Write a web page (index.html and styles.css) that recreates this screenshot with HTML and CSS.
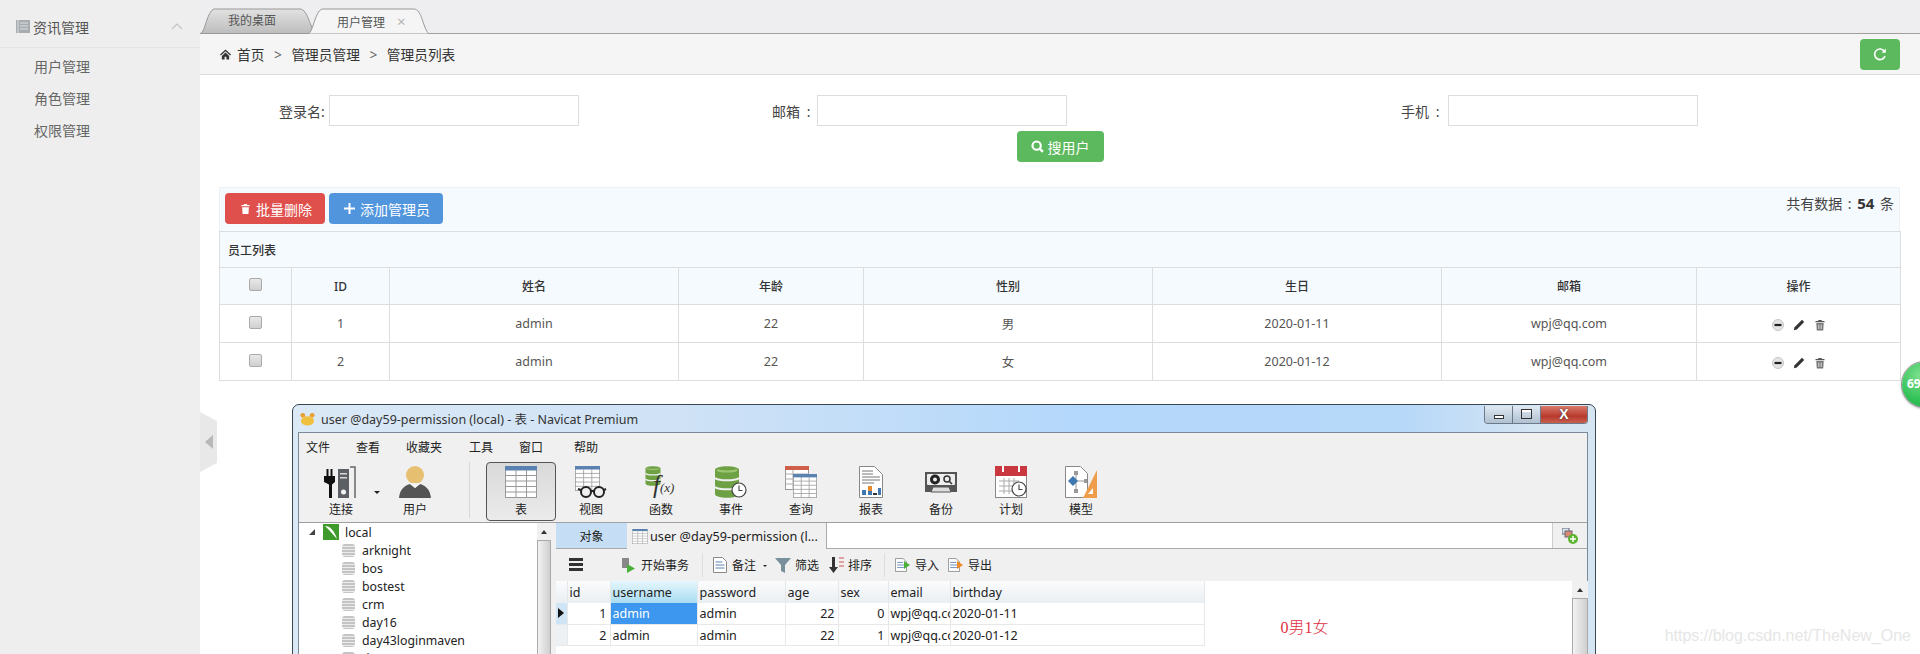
FILE: index.html
```html
<!DOCTYPE html>
<html lang="zh-CN">
<head>
  <meta charset="UTF-8">
  <title>用户管理</title>
  <link rel="stylesheet" href="styles.css">
</head>
<body>

<svg class="sprites" width="0" height="0">
  <defs>
    <symbol id="i-trash" viewBox="0 0 12 12">
      <path d="M4.500 .5h3l.5 1h2.500v1.500h-9V1.500H4z" fill="currentColor"/>
      <path d="M2.300 4h7.400l-.5 7.500H2.800z" fill="currentColor"/>
    </symbol>
    <symbol id="i-trash-line" viewBox="0 0 12 12">
      <path d="M4.500 1h3l.5 1h2.500v1.200h-9V2H4z" fill="#555"/>
      <path d="M2.300 4h7.400l-.5 7.500H2.800z" fill="#777"/>
      <path d="M4.500 5.500v4.500M6 5.500v4.500M7.500 5.500v4.500" stroke="#ddd" stroke-width=".7"/>
    </symbol>
    <symbol id="i-minus" viewBox="0 0 12 12">
      <circle cx="6" cy="6" r="5.500" fill="#e4e4e4" stroke="#bbb" stroke-width=".8"/>
      <rect x="2.500" y="4.900" width="7" height="2.200" fill="#222"/>
    </symbol>
    <symbol id="i-pencil" viewBox="0 0 12 12">
      <path d="M9 .8l2.200 2.200-7.400 7.400L.8 11.200l.8-3z" fill="#333"/>
    </symbol>
    <symbol id="i-grid" viewBox="0 0 32 32">
      <rect x=".5" y=".5" width="31" height="31" fill="#fff" stroke="#999"/>
      <rect x="0" y="0" width="32" height="4.500" fill="#5a82b0"/>
      <path d="M0 9.500h32M0 15h32M0 20.500h32M0 26h32M11 4v28M21.500 4v28" stroke="#999" fill="none"/>
    </symbol>
    <symbol id="i-db" viewBox="0 0 24 32">
      <path d="M0 4c0-5 24-5 24 0v24c0 5-24 5-24 0z" fill="#6ea044"/>
      <path d="M0 12c4 3 20 3 24 0M0 21c4 3 20 3 24 0" stroke="#f0f0f0" stroke-width="2" fill="none"/>
      <path d="M2 4c4 2 16 2 20 0" stroke="#9cc66f" stroke-width="2" fill="none"/>
    </symbol>
    <symbol id="i-clock" viewBox="0 0 16 16">
      <circle cx="8" cy="8" r="7" fill="#fff" stroke="#444" stroke-width="1.200"/>
      <path d="M8 3.500V8.500H11.500" stroke="#444" stroke-width="1.100" fill="none"/>
    </symbol>
    <symbol id="i-sheet" viewBox="0 0 14 16">
      <path d="M.5.5h9l4 4v11H.5z" fill="#fff" stroke="#888"/>
      <path d="M2.500 5h7M2.500 8h9M2.500 11h9" stroke="#5a82b0" fill="none"/>
    </symbol>
  </defs>
</svg>

<aside class="sidebar">
  <div class="side-title">
    <svg class="side-icon" viewBox="0 0 14 13"><rect width="14" height="13" fill="#a6acb0"/><path d="M2 0v13M4 3h8M4 6h8M4 9h8" stroke="#e0e0e0" fill="none"/></svg>
    <span>资讯管理</span>
    <svg class="side-chevron" viewBox="0 0 12 7"><path d="M1 6l5-5 5 5" stroke="#c4c4c4" stroke-width="1.200" fill="none"/></svg>
  </div>
  <ul class="side-menu">
    <li>用户管理</li>
    <li>角色管理</li>
    <li>权限管理</li>
  </ul>
</aside>

<main class="main">
  <div class="tabbar">
    <div class="tab">
      <svg class="tab-shape" viewBox="0 0 116 26" preserveAspectRatio="none"><defs><linearGradient id="tabOff" x1="0" y1="0" x2="0" y2="1"><stop offset="0" stop-color="#e2e2e2"/><stop offset="1" stop-color="#bdbdbd"/></linearGradient></defs><path d="M.5 25.500C5 25 7 3 14 1h86c8 0 10 20 16 24.500z" fill="url(#tabOff)" stroke="#999"/></svg>
      <span>我的桌面</span>
    </div>
    <div class="tab tab-active">
      <svg class="tab-shape" viewBox="0 0 121 26" preserveAspectRatio="none"><path d="M0 26C5 25 7 3 14 1h92c8 0 9 20 15 25z" fill="#f5f5f5" stroke="#999"/></svg>
      <span>用户管理</span><i class="tab-close">×</i>
    </div>
  </div>

  <div class="crumbs">
    <svg class="home-icon" viewBox="0 0 12 11"><path d="M6 0l6 5.500-1 1L6 2 1 6.500l-1-1z" fill="#333"/><path d="M2 7l4-3.800L10 7v4H7V8H5v3H2z" fill="#333"/></svg>
    <span>首页</span><span class="crumb-sep">&gt;</span><span>管理员管理</span><span class="crumb-sep">&gt;</span><span>管理员列表</span>
    <button class="btn btn-refresh">
      <svg viewBox="0 0 14 14" width="14" height="14"><path d="M11.500 4.500A5.300 5.300 0 1 0 12 9" stroke="#fff" stroke-width="1.600" fill="none"/><path d="M12.800 1.500v4.200H8.600z" fill="#fff"/></svg>
    </button>
  </div>

  <form class="search-form">
    <div class="search-row">
      <label class="field field-login"><span>登录名:</span><input type="text"></label>
      <label class="field field-mail"><span>邮箱 :</span><input type="text"></label>
      <label class="field field-phone"><span>手机 :</span><input type="text"></label>
    </div>
    <div class="search-submit">
      <button type="button" class="btn btn-green">
        <svg viewBox="0 0 12 12" width="13" height="13"><circle cx="5.200" cy="5.200" r="3.800" stroke="#fff" stroke-width="2" fill="none"/><path d="M8 8l3 3" stroke="#fff" stroke-width="2.200"/></svg>
        搜用户
      </button>
    </div>
  </form>

  <div class="panel">
    <div class="panel-bar">
      <div class="panel-actions">
        <button class="btn btn-red"><svg width="11" height="12"><use href="#i-trash"/></svg>批量删除</button>
        <button class="btn btn-blue">
          <svg viewBox="0 0 11 11" width="11" height="11"><path d="M5.500 0v11M0 5.500h11" stroke="#fff" stroke-width="2"/></svg>添加管理员
        </button>
      </div>
      <div class="panel-total">共有数据 : <b>54</b> 条</div>
    </div>
    <table class="staff">
      <colgroup>
        <col style="width:72px"><col style="width:98px"><col style="width:289px"><col style="width:185px">
        <col style="width:289px"><col style="width:289px"><col style="width:255px"><col style="width:204px">
      </colgroup>
      <thead>
        <tr class="staff-caption"><th colspan="8">员工列表</th></tr>
        <tr class="staff-head">
          <th><input type="checkbox" class="check"></th><th>ID</th><th>姓名</th><th>年龄</th><th>性别</th><th>生日</th><th>邮箱</th><th>操作</th>
        </tr>
      </thead>
      <tbody>
        <tr>
          <td><input type="checkbox" class="check"></td><td>1</td><td>admin</td><td>22</td><td>男</td><td>2020-01-11</td><td>wpj@qq.com</td>
          <td><span class="ops"><svg><use href="#i-minus"/></svg><svg><use href="#i-pencil"/></svg><svg><use href="#i-trash-line"/></svg></span></td>
        </tr>
        <tr>
          <td><input type="checkbox" class="check"></td><td>2</td><td>admin</td><td>22</td><td>女</td><td>2020-01-12</td><td>wpj@qq.com</td>
          <td><span class="ops"><svg><use href="#i-minus"/></svg><svg><use href="#i-pencil"/></svg><svg><use href="#i-trash-line"/></svg></span></td>
        </tr>
      </tbody>
    </table>
  </div>

  <section class="nav-window">
    <div class="nav-title">
      <svg class="nav-logo" viewBox="0 0 16 14"><ellipse cx="8" cy="9" rx="7" ry="5" fill="#f0c040"/><circle cx="3" cy="3" r="2.500" fill="#e8a030"/><circle cx="13" cy="3" r="2.500" fill="#e8a030"/></svg>
      <span>user @day59-permission (local) - 表 - Navicat Premium</span>
      <div class="win-btns">
        <span class="win-btn win-min"><i></i></span>
        <span class="win-btn win-max"><i></i></span>
        <span class="win-btn win-close">X</span>
      </div>
    </div>

    <div class="nav-body">
      <div class="nav-menu">
        <span>文件</span><span>查看</span><span class="nav-menu-fav">收藏夹</span><span>工具</span><span>窗口</span><span class="nav-menu-last">帮助</span>
      </div>

      <div class="nav-tools">
        <div class="tool tool-wide">
          <svg class="tool-icon" viewBox="0 0 36 32">
            <path d="M2 10h2.500V3h2v7h2V3h2v7H13v6l-3 2.500V32H7V18.500L2 16z" fill="#111" transform="translate(-1 0)"/>
            <path d="M15 3h11v29H15z" fill="#5c6064"/>
            <path d="M17 7h7v1.500h-7zM17 11h7v1.500h-7z" fill="#d8d8d8"/>
            <circle cx="20.500" cy="26" r="2.500" fill="#f2f2f2"/>
            <path d="M27 1h5v31" stroke="#666" stroke-width="1.500" fill="none"/>
          </svg>
          <span>连接</span>
          <i class="tool-caret"></i>
        </div>
        <div class="tool tool-wide">
          <svg class="tool-icon" viewBox="0 0 32 32">
            <circle cx="16" cy="9" r="9" fill="#e6c070"/>
            <path d="M0 32c1-9 5-12 11-14l5 4 5-4c6 2 10 5 11 14z" fill="#555"/>
            <path d="M11 18l5 4 5-4-2-1h-6z" fill="#f3f3f3"/>
          </svg>
          <span>用户</span>
        </div>
        <i class="tool-sep"></i>
        <div class="tool tool-on">
          <svg class="tool-icon"><use href="#i-grid"/></svg>
          <span>表</span>
        </div>
        <div class="tool">
          <svg class="tool-icon" viewBox="0 0 32 32">
            <use href="#i-grid" width="25" height="25" x="0" y="0"/>
            <circle cx="11" cy="26" r="5" fill="#f0f0f0" stroke="#222" stroke-width="2"/>
            <circle cx="24" cy="26" r="5" fill="#f0f0f0" stroke="#222" stroke-width="2"/>
            <path d="M16 25h3M6 24l-3-1M29 24l2-1" stroke="#222" stroke-width="2"/>
          </svg>
          <span>视图</span>
        </div>
        <div class="tool">
          <svg class="tool-icon" viewBox="0 0 32 32">
            <use href="#i-db" width="16" height="20"/>
            <text x="8" y="27" class="fx-text">f<tspan class="fx-small" dy="-1">(x)</tspan></text>
          </svg>
          <span>函数</span>
        </div>
        <div class="tool">
          <svg class="tool-icon" viewBox="0 0 32 32">
            <use href="#i-db" width="24" height="32"/>
            <use href="#i-clock" x="16" y="16" width="16" height="16"/>
          </svg>
          <span>事件</span>
        </div>
        <div class="tool">
          <svg class="tool-icon" viewBox="0 0 32 32">
            <rect x=".5" y=".5" width="23" height="23" fill="#fff" stroke="#999"/>
            <rect width="24" height="4" fill="#cf5f4a"/>
            <path d="M0 8h24M0 13h24M0 18h24M8 4v20" stroke="#aaa" fill="none"/>
            <use href="#i-grid" x="8" y="8" width="24" height="24"/>
          </svg>
          <span>查询</span>
        </div>
        <div class="tool">
          <svg class="tool-icon" viewBox="0 0 24 32">
            <path d="M.5.5h15l8 8v23H.5z" fill="#fff" stroke="#888"/>
            <path d="M3 5h11M3 8h11M3 11h18M3 14h18M3 17h12" stroke="#777" fill="none"/>
            <path d="M3 24h4v5H3zM9 20h4v9H9zM19 22h3v7h-3z" fill="#3f78b0"/>
            <path d="M9 20h4v5H9z" fill="#e58a2f"/>
            <path d="M14 27h4v2h-4z" fill="#333"/>
          </svg>
          <span>报表</span>
        </div>
        <div class="tool">
          <svg class="tool-icon" viewBox="0 0 32 32">
            <path d="M0 6h32v20H0z" fill="#555"/>
            <rect x="2" y="8" width="28" height="11" rx="1" fill="#eee"/>
            <circle cx="10" cy="13.500" r="5" fill="#222"/><circle cx="10" cy="13.500" r="2" fill="#eee"/>
            <circle cx="22" cy="13" r="3" fill="none" stroke="#333" stroke-width="1.500"/>
            <path d="M24 15l3 3" stroke="#333" stroke-width="1.500"/>
            <path d="M6 26l2-5h16l2 5z" fill="#ddd" stroke="#555"/>
          </svg>
          <span>备份</span>
        </div>
        <div class="tool">
          <svg class="tool-icon" viewBox="0 0 32 32">
            <rect x=".5" y=".5" width="31" height="31" fill="#fff" stroke="#888"/>
            <rect width="32" height="10" fill="#c9383e"/>
            <path d="M8 0v6M24 0v6" stroke="#fff" stroke-width="2"/>
            <path d="M4 15h20M4 20h20M4 25h20M9 12v16M14 12v16M19 12v16" stroke="#aaa" fill="none"/>
            <use href="#i-clock" x="16" y="15" width="16" height="16"/>
          </svg>
          <span>计划</span>
        </div>
        <div class="tool">
          <svg class="tool-icon" viewBox="0 0 32 32">
            <path d="M.5.5h15l7 7v24H.5z" fill="#fff" stroke="#888"/>
            <path d="M9 5h4v4H9zM9 23h4v4H9zM19 13h3v4h-3z" fill="#999"/>
            <path d="M11 9v14M11 15h8" stroke="#999" fill="none"/>
            <path d="M3 15l5-5 5 5-5 5z" fill="#3f78b0"/>
            <path d="M32 4v28H18z" fill="#ef9d4b"/>
            <path d="M28 22v6h-5z" fill="#fff"/>
          </svg>
          <span>模型</span>
        </div>
      </div>

      <div class="nav-split">
        <div class="tree">
          <ul class="tree-list">
            <li class="tree-root">
              <i class="tree-arrow"></i>
              <svg class="tree-conn" viewBox="0 0 16 16"><rect width="16" height="16" fill="#3f9a2c"/><path d="M2 2c5 0 9 4 12 13L6 6z" fill="#fff"/></svg>
              local
            </li>
            <li><i class="db-dot"></i>arknight</li>
            <li><i class="db-dot"></i>bos</li>
            <li><i class="db-dot"></i>bostest</li>
            <li><i class="db-dot"></i>crm</li>
            <li><i class="db-dot"></i>day16</li>
            <li><i class="db-dot"></i>day43loginmaven</li>
            <li><i class="db-dot"></i>day59</li>
          </ul>
          <div class="vscroll"><i class="vscroll-up"></i><i class="vscroll-thumb"></i></div>
        </div>

        <div class="pane">
          <div class="pane-tabs">
            <span class="pane-tab pane-tab-obj">对象</span>
            <span class="pane-tab pane-tab-doc"><svg width="16" height="15"><use href="#i-grid"/></svg>user @day59-permission (l...</span>
            <span class="pane-blank"></span>
            <span class="pane-add">
              <svg viewBox="0 0 16 16" width="16" height="16"><rect x="0" y="0" width="7" height="6" fill="#d9e4ef" stroke="#667"/><rect x="3" y="3" width="7" height="6" fill="#d98a70" stroke="#667"/><circle cx="11" cy="11" r="5" fill="#5cb531"/><path d="M11 8v6M8 11h6" stroke="#fff" stroke-width="1.500"/></svg>
            </span>
          </div>

          <div class="pane-tools">
            <span class="ham"><i></i><i></i><i></i></span>
            <span class="ptool ptool-begin">
              <svg viewBox="0 0 14 16" width="14" height="16"><rect x="1" y="1" width="7" height="10" fill="#888"/><path d="M6 7l8 4.500L6 16z" fill="#4bb03a"/></svg>开始事务
            </span>
            <i class="ptool-sep ptool-sep-a"></i>
            <span class="ptool ptool-note"><svg width="14" height="16"><use href="#i-sheet"/></svg>备注<i class="mini-caret"></i></span>
            <span class="ptool ptool-filter">
              <svg viewBox="0 0 16 16" width="16" height="16"><path d="M0 1h16l-6 7v8l-4-2V8z" fill="#78909c"/></svg>筛选
            </span>
            <span class="ptool ptool-sort">
              <svg viewBox="0 0 15 16" width="15" height="16"><path d="M3 0h3v10h3l-4.500 6L0 10h3z" fill="#333"/><path d="M10 1h5M10 5h5M10 9h5" stroke="#c55" fill="none"/></svg>排序
            </span>
            <i class="ptool-sep ptool-sep-b"></i>
            <span class="ptool ptool-in">
              <svg viewBox="0 0 15 16" width="15" height="16"><use href="#i-sheet" width="12" height="16"/><path d="M15 8l-6-4v8z" fill="#4bb03a"/></svg>导入
            </span>
            <span class="ptool ptool-out">
              <svg viewBox="0 0 15 16" width="15" height="16"><use href="#i-sheet" width="12" height="16"/><path d="M15 8l-6-4v8z" fill="#ee8a1f"/></svg>导出
            </span>
          </div>

          <div class="grid-area">
            <table class="grid">
              <colgroup>
                <col style="width:11px"><col style="width:43px"><col style="width:87px"><col style="width:88px">
                <col style="width:53px"><col style="width:50px"><col style="width:62px"><col style="width:254px">
              </colgroup>
              <thead>
                <tr><th></th><th>id</th><th class="grid-sel">username</th><th>password</th><th>age</th><th>sex</th><th>email</th><th>birthday</th></tr>
              </thead>
              <tbody>
                <tr><td class="grid-mark grid-mark-on"><i></i></td><td class="num">1</td><td class="grid-cell-on">admin</td><td>admin</td><td class="num">22</td><td class="num">0</td><td>wpj@qq.com</td><td>2020-01-11</td></tr>
                <tr><td class="grid-mark"></td><td class="num">2</td><td>admin</td><td>admin</td><td class="num">22</td><td class="num">1</td><td>wpj@qq.com</td><td>2020-01-12</td></tr>
              </tbody>
            </table>
            <p class="grid-note">0男1女</p>
            <div class="vscroll vscroll-grid"><i class="vscroll-up"></i><i class="vscroll-thumb"></i></div>
          </div>
        </div>
      </div>
    </div>
  </section>

  <div class="side-handle"><i></i></div>
</main>

<div class="bubble">69</div>
<div class="watermark">https://blog.csdn.net/TheNew_One</div>

</body>
</html>
```

FILE: styles.css
```css
* {
  box-sizing: border-box;
}

html, body {
  height: 100%;
}

body {
  margin: 0;
  display: flex;
  overflow: hidden;
  position: relative;
  background: #fff;
  color: #333;
  font-family: "Noto Sans", "Noto Sans CJK SC", sans-serif;
  font-size: 14px;
}

.sprites {
  position: absolute;
}

/* sidebar */
.sidebar {
  width: 200px;
  flex: none;
  background: #eeeeee;
}

.side-title {
  height: 48px;
  display: flex;
  align-items: center;
  padding: 6px 17px 0 16px;
  border-bottom: 1px solid #e5e5e5;
  color: #555;
}

.side-icon {
  width: 14px;
  height: 13px;
  margin-right: 3px;
}

.side-chevron {
  width: 12px;
  height: 7px;
  margin-left: auto;
}

.side-menu {
  list-style: none;
  margin: 0;
  padding: 3px 0 0 34px;
  color: #666;
}

.side-menu li {
  line-height: 32px;
}

/* main column */
.main {
  flex: 1;
  min-width: 0;
  height: 100%;
  overflow: hidden;
  position: relative;
}

.tabbar {
  height: 34px;
  display: flex;
  align-items: flex-end;
  background: #eeeef0;
  border-bottom: 1px solid #a0a0a0;
  font-size: 12px;
  color: #555;
}

.tab {
  position: relative;
  width: 116px;
  height: 26px;
  margin-bottom: -1px;
  padding: 0 0 0 28px;
  line-height: 26px;
}

.tab span, .tab i {
  position: relative;
}

.tab-active {
  width: 121px;
  margin-left: -8px;
  padding-left: 29px;
}

.tab-shape {
  position: absolute;
  left: 0;
  top: 0;
  width: 100%;
  height: 100%;
}

.tab-close {
  margin-left: 12px;
  font-style: normal;
  font-size: 15px;
  color: #b5b5b5;
}

.crumbs {
  height: 41px;
  display: flex;
  align-items: center;
  padding: 0 20px;
  background: #f5f5f5;
  border-bottom: 1px solid #ddd;
  font-size: 13.700px;
}

.home-icon {
  width: 11px;
  height: 11px;
  margin-right: 6px;
}

.crumb-sep {
  width: 27px;
  text-align: center;
  color: #666;
}

.btn {
  display: inline-flex;
  align-items: center;
  height: 31px;
  border: 0;
  border-radius: 4px;
  color: #fff;
  font: inherit;
  font-size: 14px;
}

.btn-refresh {
  width: 40px;
  margin-left: auto;
  justify-content: center;
  background: #5db95d;
}

.search-form {
  padding-top: 20px;
}

.search-row {
  display: flex;
  padding-left: 79px;
}

.field {
  display: flex;
  align-items: center;
  color: #444;
}

.field span {
  width: 50px;
  word-spacing: 3px;
}

.field input {
  width: 250px;
  height: 31px;
  padding: 0 6px;
  border: 1px solid #ddd;
  background: #fff;
}

.field-mail {
  margin-left: 193px;
}

.field-mail span {
  width: 45px;
}

.field-phone {
  margin-left: 334px;
}

.field-phone span {
  width: 47px;
}

.search-submit {
  margin-top: 5px;
  text-align: center;
}

.btn-green {
  width: 87px;
  padding-left: 14px;
  gap: 4px;
  background: #5db95d;
}

.panel {
  margin: 25px 20px 0 19px;
}

.panel-bar {
  height: 44px;
  display: flex;
  justify-content: space-between;
  padding: 5px 5px 0 5px;
  background: #f5fafe;
  border: 1px solid #edf1f4;
  border-bottom: 0;
}

.panel-actions {
  display: flex;
  gap: 4px;
}

.btn-red {
  width: 100px;
  padding-left: 15px;
  gap: 5px;
  background: #df4f4c;
}

.btn-blue {
  width: 114px;
  padding-left: 15px;
  gap: 5px;
  background: #5195dd;
}

.panel-total {
  line-height: 20px;
  word-spacing: 2px;
  color: #444;
}

.panel-total b {
  font-size: 15px;
  color: #333;
}

.staff {
  width: 1681px;
  table-layout: fixed;
  border-collapse: collapse;
  font-size: 12.500px;
  color: #555;
}

.staff th, .staff td {
  border: 1px solid #ddd;
  text-align: center;
  padding: 0;
}

.staff th {
  background: #f5fafe;
  color: #333;
  font-size: 12px;
  font-weight: 500;
}

.staff-caption {
  height: 36px;
}

.staff .staff-caption th {
  text-align: left;
  padding-left: 8px;
}

.staff-head {
  height: 37px;
}

.staff tbody tr {
  height: 38px;
}

.check {
  appearance: none;
  display: block;
  width: 13px;
  height: 13px;
  margin: -3px auto 0;
  border: 1px solid #aaa;
  border-radius: 2px;
  background: linear-gradient(#e8e8e8, #d0d0d0);
}

.ops {
  display: inline-flex;
  gap: 9px;
  vertical-align: middle;
  color: #555;
}

.ops svg {
  width: 12px;
  height: 12px;
}

/* navicat screenshot pasted under the table */
.nav-window {
  width: 1304px;
  height: 300px;
  margin: 23px 0 0 92px;
  padding: 0 7px 0 5px;
  border: 1px solid #3a4650;
  border-radius: 7px 7px 0 0;
  background: linear-gradient(90deg, #dbe9f6 0, #cfe2f6 30%, #b4d8fb 60%, #b6d8f9 85%, #d6e5f2 96%);
  color: #222;
  font-size: 12px;
}

.nav-title {
  height: 27px;
  display: flex;
  align-items: center;
  font-size: 12.500px;
  color: #333;
}

.nav-logo {
  width: 15px;
  height: 14px;
  margin: 0 6px 0 2px;
}

.win-btns {
  display: flex;
  height: 18px;
  margin: -8px 0 0 auto;
  border: 1px solid #6a7a8a;
  border-top: 0;
  border-radius: 0 0 4px 4px;
  overflow: hidden;
}

.win-btn {
  width: 28px;
  display: flex;
  align-items: center;
  justify-content: center;
  background: linear-gradient(#dfe9f3, #b0c0d0);
  border-right: 1px solid #6a7a8a;
}

.win-min i {
  width: 10px;
  height: 4px;
  margin-top: 6px;
  border: 1px solid #333;
  background: #fff;
}

.win-max i {
  width: 11px;
  height: 10px;
  border: 1px solid #333;
  box-shadow: inset 0 2px 0 #fff;
}

.win-close {
  width: 46px;
  border-right: 0;
  background: linear-gradient(#d97a6c, #b83a2c 60%, #c8604f);
  color: #fff;
  font: bold 14px "Liberation Sans", sans-serif;
  text-shadow: 0 0 2px #333;
}

.nav-body {
  height: 300px;
  background: #f0f0f0;
  border: 1px solid #7a8a99;
  border-bottom: 0;
}

.nav-menu {
  display: flex;
  height: 28px;
  align-items: center;
}

.nav-menu span {
  padding: 0 13px;
}

.nav-menu span:first-child {
  padding-left: 7px;
}

.nav-menu .nav-menu-fav {
  margin-right: 1px;
}

.nav-menu .nav-menu-last {
  margin-left: 5px;
}

.nav-tools {
  display: flex;
  height: 62px;
  padding: 1px 0 0 5px;
  border-bottom: 1px solid #a0a0a0;
}

.tool {
  position: relative;
  width: 70px;
  height: 59px;
  display: flex;
  flex-direction: column;
  align-items: center;
  padding-top: 3px;
  border: 1px solid transparent;
  border-radius: 4px;
}

.tool-wide {
  width: 74px;
}

.tool-on {
  border-color: #555;
  background: linear-gradient(#d9d9d9, #ebebeb);
}

.tool-icon {
  width: 32px;
  height: 32px;
  margin-bottom: 2px;
}

.tool-wide .tool-icon {
  width: 36px;
}

.tool-caret {
  position: absolute;
  right: -3px;
  top: 28px;
  border: 3px solid transparent;
  border-top-color: #222;
}

.tool-sep {
  width: 1px;
  height: 56px;
  margin: 0 16px 0 17px;
  background: #d8d8d8;
}

.fx-text {
  font: italic 25px "Liberation Serif", serif;
  fill: #333;
}

.fx-small {
  font-size: 13px;
}

.nav-split {
  display: flex;
  height: 200px;
}

/* tree */
.tree {
  width: 252px;
  flex: none;
  display: flex;
  background: #fff;
  font-size: 12.300px;
}

.tree-list {
  flex: 1;
  list-style: none;
  margin: 0;
  padding: 0 0 0 43px;
  overflow: hidden;
}

.tree-list li {
  height: 18px;
  display: flex;
  align-items: center;
}

.tree-root {
  margin-left: -33px;
}

.tree-arrow {
  width: 0;
  height: 0;
  margin-right: 8px;
  border: 3px solid transparent;
  border-right-color: #444;
  border-bottom-color: #444;
}

.tree-conn {
  width: 16px;
  height: 16px;
  margin-right: 6px;
}

.db-dot {
  width: 13px;
  height: 13px;
  margin-right: 7px;
  border-radius: 3px;
  background: repeating-linear-gradient(#c4c4c4 0, #c4c4c4 2px, #ececec 2px, #ececec 3px);
}

.vscroll {
  width: 14px;
  flex: none;
  background: #f0f0f0;
  display: flex;
  flex-direction: column;
  align-items: center;
}

.vscroll-up {
  margin-top: 7px;
  border: 3px solid transparent;
  border-top: 0;
  border-bottom: 4px solid #333;
}

.vscroll-thumb {
  width: 100%;
  height: 200px;
  margin-top: 6px;
  border: 1px solid #aaa;
  background: linear-gradient(90deg, #f2f2f2, #cfcfcf);
}

/* right pane */
.pane {
  flex: 1;
  min-width: 0;
  padding-left: 5px;
}

.pane-tabs {
  display: flex;
  height: 26px;
  border-bottom: 1px solid #aaa;
}

.pane-tab {
  display: flex;
  align-items: center;
  justify-content: center;
}

.pane-tab-obj {
  width: 71px;
  background: #c6def5;
}

.pane-tab-doc {
  width: 200px;
  height: 26px;
  justify-content: flex-start;
  padding-left: 5px;
  gap: 2px;
  background: #f0f0f0;
  border-right: 1px solid #aaa;
  white-space: nowrap;
  font-size: 12.700px;
}

.pane-blank {
  flex: 1;
  background: #fff;
}

.pane-add {
  width: 35px;
  display: flex;
  align-items: center;
  justify-content: center;
  border-left: 1px solid #ccc;
}

.pane-tools {
  height: 32px;
  display: flex;
  align-items: center;
}

.ham {
  width: 14px;
  margin-left: 13px;
}

.ham i {
  display: block;
  height: 3px;
  margin-bottom: 2px;
  background: #333;
}

.ptool {
  display: inline-flex;
  align-items: center;
  gap: 5px;
}

.ptool-begin {
  margin-left: 38px;
  gap: 6px;
}

.ptool-sep {
  width: 1px;
  height: 24px;
  background: #ddd;
}

.ptool-sep-a {
  margin: 0 10px 0 13px;
}

.mini-caret {
  margin: 3px 0 0 2px;
  border: 2.500px solid transparent;
  border-top-color: #222;
}

.ptool-filter {
  margin-left: 8px;
  gap: 4px;
}

.ptool-sort {
  margin-left: 10px;
  gap: 4px;
}

.ptool-sep-b {
  margin: 0 10px 0 12px;
}

.ptool-out {
  margin-left: 9px;
}

.grid-area {
  height: 140px;
  display: flex;
  background: #fff;
}

.grid {
  width: 648px;
  height: 65px;
  flex: none;
  table-layout: fixed;
  border-collapse: collapse;
  font-size: 12.500px;
  color: #222;
}

.grid th {
  height: 22px;
  padding: 0 0 0 2px;
  text-align: left;
  font-weight: 400;
  background: linear-gradient(#fbfcfd, #e9eef2);
  border-right: 1px solid #e4e8ea;
  overflow: hidden;
}

.grid .grid-sel {
  background: linear-gradient(#e6f6fc, #a8dcf2);
}

.grid td {
  height: 21px;
  padding: 1px 1px 0 2px;
  border-right: 1px solid #e8e8e8;
  border-bottom: 1px solid #e8e8e8;
  white-space: nowrap;
  overflow: hidden;
}

.grid .num {
  text-align: right;
  padding-right: 3px;
}

.grid .grid-mark {
  padding: 0;
  background: #eef1f4;
}

.grid .grid-mark-on {
  background: #cfe4f5;
}

.grid-mark i {
  display: block;
  width: 0;
  margin-left: 2px;
  border: 5px solid transparent;
  border-left: 6px solid #111;
  border-right: 0;
}

.grid .grid-cell-on {
  background: #3d97ee;
  color: #fff;
}

.grid-note {
  flex: none;
  margin: 36px 0 0 76px;
  width: 291px;
  font: 300 16px/22px "Liberation Serif", "Noto Sans CJK SC", serif;
  color: #e0303f;
}

.vscroll-grid {
  margin-left: auto;
  width: 16px;
}

/* things lying over the page */
.side-handle {
  position: absolute;
  left: 0;
  top: 412px;
  width: 17px;
  height: 60px;
  display: flex;
  align-items: center;
  padding-left: 5px;
  background: #e8e8e8;
  clip-path: polygon(0 0, 100% 15%, 100% 85%, 0 100%);
}

.side-handle i {
  border: 7px solid transparent;
  border-right: 8px solid #b8b8b8;
  border-left: 0;
}

.bubble {
  position: absolute;
  left: 1902px;
  top: 362px;
  width: 45px;
  height: 45px;
  padding: 13px 0 0 5px;
  border-radius: 50%;
  background: radial-gradient(circle at 40% 30%, #7ee08f, #2fc155 60%, #23a547);
  box-shadow: 0 0 0 1px #999, 0 1px 3px #777;
  color: #fff;
  font: bold 12px "Noto Sans", sans-serif;
}

.watermark {
  position: absolute;
  right: 9px;
  top: 625px;
  font: 16px/22px "Liberation Sans", sans-serif;
  color: #e6e6e6;
}
```
